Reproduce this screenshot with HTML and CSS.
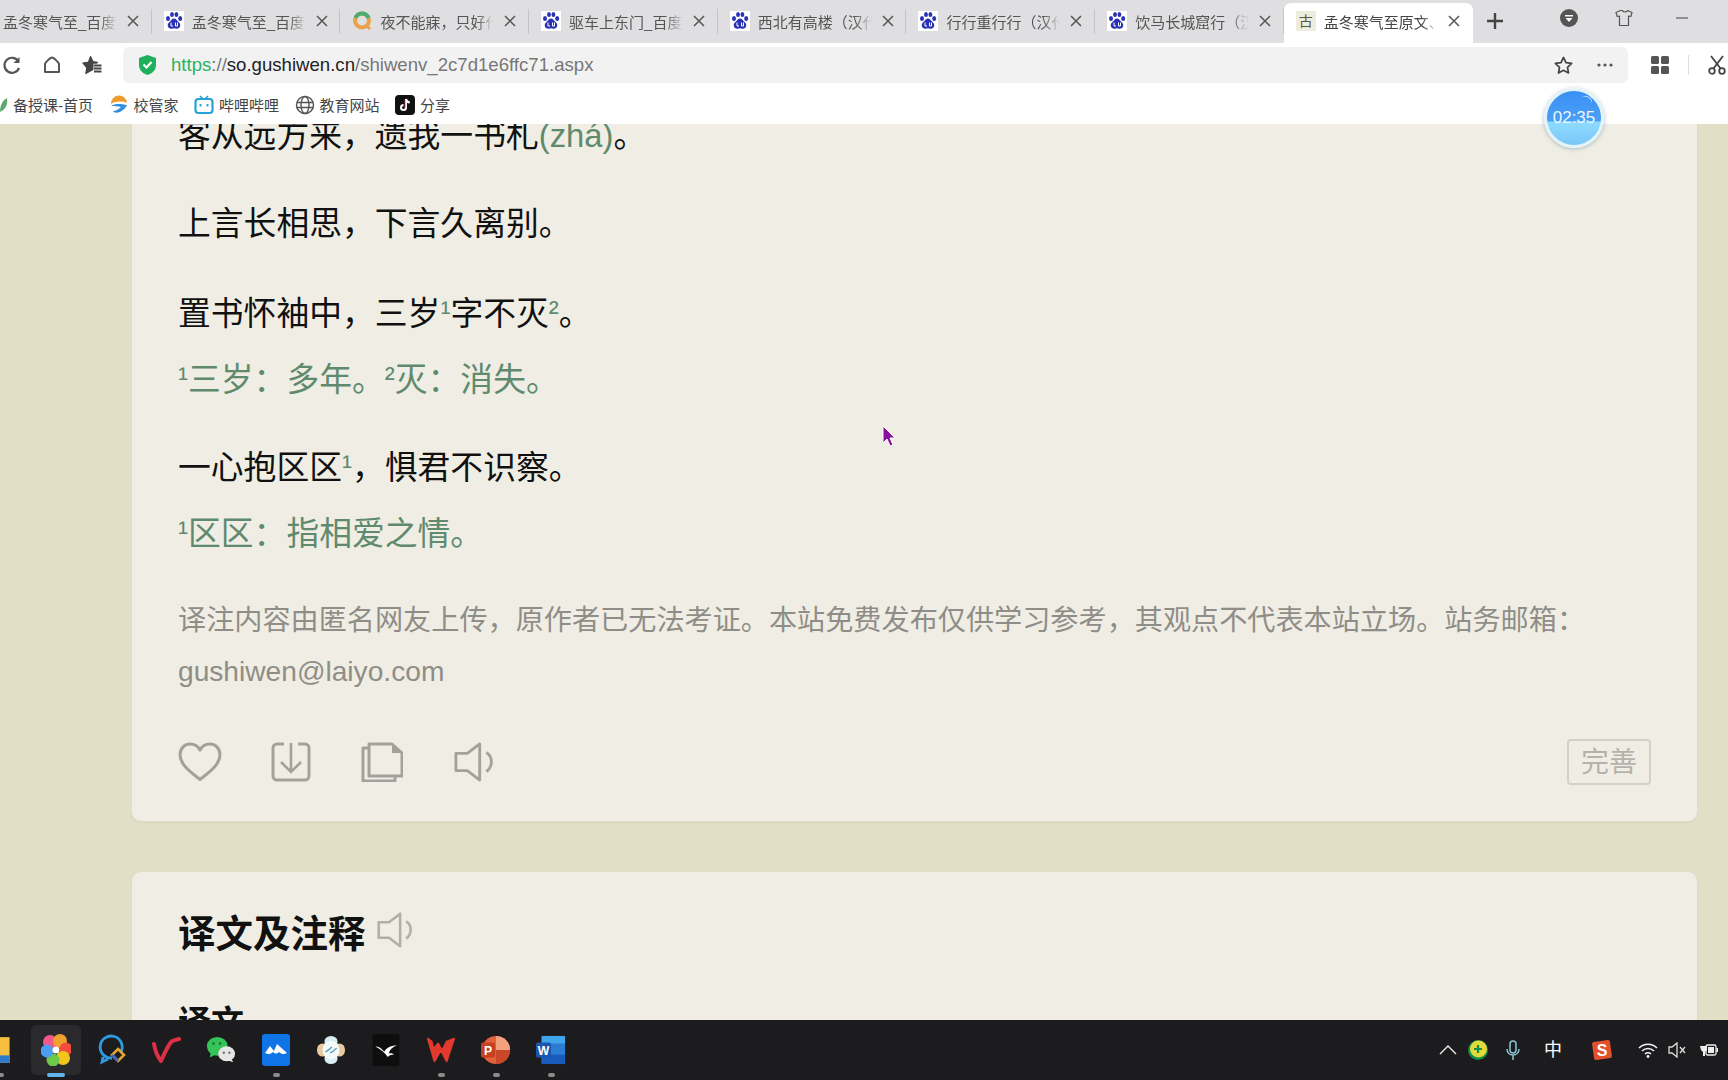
FILE: index.html
```html
<!DOCTYPE html>
<html lang="zh-CN">
<head>
<meta charset="utf-8">
<title>孟冬寒气至原文、翻译</title>
<link rel="stylesheet" href="styles.css">
</head>
<body>
<svg class="defs" aria-hidden="true">
  <symbol id="baidu" viewBox="0 0 20 20">
    <rect width="20" height="20" fill="#fff"/>
    <g fill="#2a32b5">
      <ellipse cx="4" cy="7.5" rx="2" ry="2.6"/>
      <ellipse cx="8" cy="3.6" rx="1.9" ry="2.5"/>
      <ellipse cx="12.4" cy="3.6" rx="1.9" ry="2.5"/>
      <ellipse cx="16.2" cy="7.5" rx="2" ry="2.6"/>
      <path d="M10 7.4c2 0 2.6 1.7 4 3 1.5 1.3 2.6 2.5 2.2 4.6-.4 2.3-2.5 3-4 2.7-.9-.2-1.500-.5-2.200-.5s-1.300.3-2.200.5c-1.500.3-3.600-.4-4-2.700-.4-2.100.7-3.300 2.200-4.600 1.400-1.300 2-3 4-3z"/>
    </g>
    <path d="M7 11.500v3.500h2M11.500 11.500v3.500h2v-3.500" fill="none" stroke="#fff" stroke-width="1"/>
  </symbol>
  <symbol id="close" viewBox="0 0 12 12">
    <path d="M1 1l10 10M11 1L1 11" stroke="#555" stroke-width="1.500" fill="none"/>
  </symbol>
  <symbol id="speaker" viewBox="0 0 42 42">
    <path d="M2 12h12L27 2v38L14 30H2z" fill="none" stroke="currentColor" stroke-width="3" stroke-linejoin="round"/>
    <path d="M34 11c7 4 7 15 0 20" fill="none" stroke="currentColor" stroke-width="3"/>
  </symbol>
</svg>

<header class="tabbar">
  <div class="tab">
    <svg class="fav"><use href="#baidu"/></svg><span class="tab-title">孟冬寒气至_百度搜索</span><svg class="tab-x"><use href="#close"/></svg>
  </div>
  <div class="tab">
    <svg class="fav"><use href="#baidu"/></svg><span class="tab-title">孟冬寒气至_百度搜索</span><svg class="tab-x"><use href="#close"/></svg>
  </div>
  <div class="tab">
    <svg class="fav" viewBox="0 0 20 20"><circle cx="10" cy="9.500" r="7" fill="none" stroke="#e9a24a" stroke-width="4"/><path d="M3.500 7a7 7 0 0 1 13 0" fill="none" stroke="#49ad6f" stroke-width="4"/><path d="M14 14l4 4" stroke="#e9a24a" stroke-width="3"/></svg><span class="tab-title">夜不能寐，只好什么</span><svg class="tab-x"><use href="#close"/></svg>
  </div>
  <div class="tab">
    <svg class="fav"><use href="#baidu"/></svg><span class="tab-title">驱车上东门_百度搜索</span><svg class="tab-x"><use href="#close"/></svg>
  </div>
  <div class="tab">
    <svg class="fav"><use href="#baidu"/></svg><span class="tab-title">西北有高楼（汉代）</span><svg class="tab-x"><use href="#close"/></svg>
  </div>
  <div class="tab">
    <svg class="fav"><use href="#baidu"/></svg><span class="tab-title">行行重行行（汉代）</span><svg class="tab-x"><use href="#close"/></svg>
  </div>
  <div class="tab">
    <svg class="fav"><use href="#baidu"/></svg><span class="tab-title">饮马长城窟行（汉代）</span><svg class="tab-x"><use href="#close"/></svg>
  </div>
  <div class="tab tab-active">
    <span class="fav fav-gu">古</span><span class="tab-title">孟冬寒气至原文、翻译</span><svg class="tab-x"><use href="#close"/></svg>
  </div>
  <svg class="new-tab" viewBox="0 0 16 16"><path d="M8 0v16M0 8h16" stroke="#444" stroke-width="2.400"/></svg>
  <svg class="win-badge" viewBox="0 0 18 18"><circle cx="9" cy="9" r="9" fill="#555"/><path d="M5 6h8v1.500H5zM5.500 9h7L9 13z" fill="#fff"/></svg>
  <svg class="win-shirt" viewBox="0 0 18 18"><path d="M5.500 1.500L1 3.500l1.200 4 2.300-.5v9.500h9V7l2.300.5 1.200-4-4.500-2c-.8 2-4.200 2-5 0z" fill="none" stroke="#555" stroke-width="1.200" stroke-linejoin="round"/></svg>
  <svg class="win-min" viewBox="0 0 12 2"><path d="M0 1h12" stroke="#666" stroke-width="1.300"/></svg>
</header>

<nav class="toolbar">
  <svg class="tool tool-first" viewBox="0 0 20 20"><path d="M16.500 6.500A7.500 7.500 0 1 0 17 13" fill="none" stroke="#555" stroke-width="2.200"/><path d="M17.500 2v6h-6z" fill="#555"/></svg>
  <svg class="tool" viewBox="0 0 20 20"><path d="M3 9c0-1 5-6.500 7-6.500S17 8 17 9v8H3z" fill="none" stroke="#555" stroke-width="2" stroke-linejoin="round"/></svg>
  <svg class="tool" viewBox="0 0 20 20"><path d="M8.500 1.500l2.500 5.200 4.500.6-4 3.700-.2 3.500-3 1.500-4.500 2.500 1-5.800L1 8l5.500-1z" fill="#444" stroke="#444" stroke-width="1.200" stroke-linejoin="round"/><path d="M11.500 10.500h8M11.500 13.500h8M11.500 16.500h8" stroke="#fff" stroke-width="3.500"/><path d="M12 10.500h7.500M12 13.500h7.500M12 16.500h7.500" stroke="#444" stroke-width="1.800"/></svg>
  <div class="address">
    <svg class="shield" viewBox="0 0 17 20"><path d="M8.500 0L17 3v7c0 5-3.500 8.500-8.500 10C3.500 18.500 0 15 0 10V3z" fill="#1eb05a"/><path d="M4.500 9.500l3 3 5-5.500" fill="none" stroke="#fff" stroke-width="2.200"/></svg>
    <div class="url"><span class="u-green">https</span><span class="u-gray">://</span><span class="u-host">so.gushiwen.cn</span><span class="u-gray">/shiwenv_2c7d1e6ffc71.aspx</span></div>
    <svg class="addr-star" viewBox="0 0 20 20"><path d="M10 1.500l2.600 5.500 6 .8-4.400 4.100 1.100 6-5.300-2.900-5.300 2.900 1.100-6L1.400 7.800l6-.8z" fill="none" stroke="#444" stroke-width="1.800" stroke-linejoin="round"/></svg>
    <svg class="addr-dots" viewBox="0 0 16 4"><circle cx="2" cy="2" r="1.600" fill="#555"/><circle cx="8" cy="2" r="1.600" fill="#555"/><circle cx="14" cy="2" r="1.600" fill="#555"/></svg>
  </div>
  <svg class="grid-ico" viewBox="0 0 18 18"><g fill="#555"><rect width="8" height="8" rx="1.500"/><rect x="10" width="8" height="8" rx="1.500"/><rect y="10" width="8" height="8" rx="1.500"/><rect x="10" y="10" width="8" height="8" rx="1.500"/></g></svg>
  <span class="tool-sep"></span>
  <svg class="scissors" viewBox="0 0 18 20"><g fill="none" stroke="#444" stroke-width="1.800"><circle cx="4" cy="16" r="2.800"/><circle cx="14" cy="16" r="2.800"/><path d="M5.500 13.500L15 1M12.500 13.500L3 1"/></g></svg>
</nav>

<nav class="bookmarks">
  <span class="bm bm-first"><svg class="bm-ico bm-leaf" viewBox="0 0 8 16"><path d="M0 15C0 8 3 3 7 1c1 6-1 11-7 14z" fill="#5aa86b"/></svg>备授课-首页</span>
  <span class="bm"><svg class="bm-ico" viewBox="0 0 20 20"><path d="M2 9a8 8 0 0 1 16-1c-5-2-11-2-16 1z" fill="#ee9a2e"/><path d="M2 11c5-3 10-2 16-1-1 3-4 5-7 7-3 1-6 1-7-1 3 0 6-2 8-4-3-1-7-1-10-1z" fill="#2f8fe0"/></svg>校管家</span>
  <span class="bm"><svg class="bm-ico" viewBox="0 0 20 20"><path d="M6 1l3 3M14 1l-3 3" stroke="#27a3d8" stroke-width="1.600"/><rect x="1.500" y="4" width="17" height="14" rx="3" fill="none" stroke="#27a3d8" stroke-width="2.200"/><path d="M6.500 9v2.500M13.500 9v2.500" stroke="#27a3d8" stroke-width="2"/></svg>哔哩哔哩</span>
  <span class="bm"><svg class="bm-ico" viewBox="0 0 20 20"><g fill="none" stroke="#555" stroke-width="1.400"><circle cx="10" cy="10" r="8.500"/><ellipse cx="10" cy="10" rx="4" ry="8.500"/><path d="M1.500 7.500h17M1.500 12.500h17"/></g></svg>教育网站</span>
  <span class="bm"><svg class="bm-ico" viewBox="0 0 20 20"><rect width="20" height="20" rx="4" fill="#111"/><path d="M11 4v8.500a2.500 2.500 0 1 1-2.500-2.500M11 4c.3 2 1.700 3.300 3.800 3.500" fill="none" stroke="#fff" stroke-width="2"/><path d="M10 5v8" stroke="#e8345a" stroke-width=".8"/></svg>分享</span>
</nav>

<main class="viewport">
  <div class="scroller">
    <article class="card card-poem">
      <p class="verse">客从远方来，遗我一书札<span class="green">(zhá)</span>。</p>
      <p class="verse verse-gap">上言长相思，下言久离别。</p>
      <div class="verse">
        <p>置书怀袖中，三岁<span class="green sup">¹</span>字不灭<span class="green sup">²</span>。</p>
        <p class="green"><span class="sup">¹</span>三岁：多年。<span class="sup">²</span>灭：消失。</p>
      </div>
      <div class="verse">
        <p>一心抱区区<span class="green sup">¹</span>，惧君不识察。</p>
        <p class="green"><span class="sup">¹</span>区区：指相爱之情。</p>
      </div>
      <p class="credit">译注内容由匿名网友上传，原作者已无法考证。本站免费发布仅供学习参考，其观点不代表本站立场。站务邮箱：gushiwen@laiyo.com</p>
      <div class="actions">
        <svg class="act act-heart" viewBox="0 0 44 40"><path d="M22 37.500C14 31 2 23 2 13 2 6 7 2 12 2c4 0 8 2 10 6 2-4 6-6 10-6 5 0 10 4 10 11 0 10-12 18-20 24.500z" fill="none" stroke="#a3a19b" stroke-width="3" stroke-linejoin="round"/></svg>
        <svg class="act act-down" viewBox="0 0 40 40"><path d="M13 2H6a4 4 0 0 0-4 4v28a4 4 0 0 0 4 4h28a4 4 0 0 0 4-4V6a4 4 0 0 0-4-4h-7" fill="none" stroke="#a3a19b" stroke-width="3"/><path d="M20 1v29M10 20l10 10 10-10" fill="none" stroke="#a3a19b" stroke-width="2.600"/></svg>
        <svg class="act act-copy" viewBox="0 0 42 40"><path d="M7 6H2v33h32v-5" fill="none" stroke="#a3a19b" stroke-width="3" stroke-linejoin="round"/><path d="M8 2h23l10 9v23H8z" fill="none" stroke="#a3a19b" stroke-width="3" stroke-linejoin="round"/><path d="M31 2v9h10z" fill="#a3a19b"/></svg>
        <svg class="act act-sound"><use href="#speaker"/></svg>
        <span class="perfect">完善</span>
      </div>
    </article>

    <article class="card card-notes">
      <h2 class="card-title">译文及注释<svg class="title-sound"><use href="#speaker"/></svg></h2>
      <h3 class="card-sub">译文</h3>
    </article>
  </div>
  <svg class="cursor" viewBox="0 0 14 22"><path d="M1 1v17l4-4 3 7 3-1-3-7h5z" fill="#8a0f9e" stroke="#fff" stroke-width="1"/></svg>
</main>

<div class="timer">02:35</div>

<footer class="taskbar">
  <div class="apps">
    <div class="app"><svg class="app-ico" viewBox="0 0 28 28"><path d="M0 2h22v24H0z" fill="#f6bf3f"/><path d="M0 19h22v7H0z" fill="#2f79c9"/></svg><i class="dot"></i></div>
    <div class="app app-active"><svg class="app-ico" viewBox="0 0 30 32"><circle cx="9" cy="8" r="7" fill="#ef5a8a"/><circle cx="19" cy="7" r="7" fill="#f0a12e"/><circle cx="25" cy="15" r="6.500" fill="#f44d3c"/><circle cx="22" cy="24" r="7" fill="#f2c51d"/><circle cx="12" cy="26" r="6.500" fill="#6cc74b"/><circle cx="6" cy="17" r="6.500" fill="#4a9df0"/><circle cx="15" cy="16" r="3.500" fill="#fff"/></svg><i class="dot dot-active"></i></div>
    <div class="app"><svg class="app-ico" viewBox="0 0 30 30"><path d="M16 23a11 11 0 1 1 9-6M7 22l-1 5 6-3" fill="none" stroke="#2f9ae0" stroke-width="2.800"/><path d="M22 14l6 6-6 6-6-6z" fill="none" stroke="#e6a532" stroke-width="2.600"/><path d="M22 26l-6-6" stroke="#3a64c8" stroke-width="2.600"/></svg></div>
    <div class="app"><svg class="app-ico" viewBox="0 0 30 30"><path d="M3 9c1 6 3 12 7 17 4-9 7-15 10-19 2-2 5-2 8-3" fill="none" stroke="#dd2f45" stroke-width="4" stroke-linecap="round" stroke-linejoin="round"/></svg></div>
    <div class="app"><svg class="app-ico" viewBox="0 0 32 32"><ellipse cx="12" cy="12" rx="11" ry="10" fill="#35c45a"/><path d="M5 19l-1 5 6-3z" fill="#35c45a"/><ellipse cx="22" cy="20" rx="9" ry="8" fill="#e6e6e6"/><path d="M27 25l2 4-6-2z" fill="#e6e6e6"/><circle cx="19" cy="19" r="1.300" fill="#777"/><circle cx="25" cy="19" r="1.300" fill="#777"/><circle cx="8" cy="9" r="1.300" fill="#146b2c"/><circle cx="15" cy="9" r="1.300" fill="#146b2c"/></svg></div>
    <div class="app"><svg class="app-ico" viewBox="0 0 28 32"><rect width="28" height="32" rx="3" fill="#0f74e6"/><path d="M3 19l5-7 4 5 3-7 10 9c-3 2-6 1-8-1-2 2-4 2-6 0-2 2-5 3-8 1z" fill="#fff"/></svg><i class="dot"></i></div>
    <div class="app"><svg class="app-ico" viewBox="0 0 32 32"><g fill="#d9eef2"><ellipse cx="16" cy="7" rx="7" ry="6"/><ellipse cx="16" cy="25" rx="7" ry="6"/></g><ellipse cx="7" cy="16" rx="6" ry="7" fill="#e8c9a0"/><ellipse cx="25" cy="16" rx="6" ry="7" fill="#e8c9a0"/><ellipse cx="16" cy="16" rx="9" ry="10" fill="#f4fbfb"/><path d="M10 18c3-1 5-4 7-5M15 19c3-1 5-3 7-5" stroke="#4a9ab8" stroke-width="1.500" fill="none"/></svg></div>
    <div class="app"><svg class="app-ico" viewBox="0 0 30 36"><rect width="30" height="36" rx="2" fill="#0e0e0f"/><path d="M3 14c4 0 7 2 10 6 2-4 7-7 14-7-5 2-7 4-9 9 3-1 5 0 6 1-3 0-6 1-7 3-3-5-8-9-14-12z" fill="#fff"/></svg></div>
    <div class="app"><svg class="app-ico" viewBox="0 0 32 30"><path d="M2 3l7 24 7-12 6 12 8-24-8 3-5 10-4-8-5 6-2-8z" fill="#e23a2e" stroke="#e23a2e" stroke-width="2" stroke-linejoin="round"/></svg><i class="dot"></i></div>
    <div class="app"><svg class="app-ico" viewBox="0 0 32 32"><circle cx="16" cy="16" r="15" fill="#e0613a"/><path d="M16 1a15 15 0 0 1 15 15H16z" fill="#f2a07e"/><path d="M16 16h15a15 15 0 0 1-15 15z" fill="#c9482a"/><rect x="0" y="8" width="15" height="16" rx="2" fill="#c7401f"/><text class="app-letter" x="7.500" y="21">P</text></svg><i class="dot"></i></div>
    <div class="app"><svg class="app-ico" viewBox="0 0 32 32"><rect x="6" y="1" width="25" height="30" rx="2" fill="#2b7cd3"/><rect x="6" y="1" width="25" height="8" fill="#41a5ee"/><rect x="6" y="21" width="25" height="10" fill="#185abd"/><rect x="0" y="8" width="16" height="16" rx="2" fill="#1a56b0"/><text class="app-letter" x="8" y="21">W</text></svg><i class="dot"></i></div>
  </div>
  <div class="tray">
    <svg class="tr tr-up" viewBox="0 0 18 10"><path d="M1 9l8-8 8 8" fill="none" stroke="#eee" stroke-width="1.400"/></svg>
    <svg class="tr tr-green" viewBox="0 0 20 20"><circle cx="10" cy="10" r="10" fill="#0f8f4a"/><circle cx="10.500" cy="9" r="8.500" fill="#e4d93b"/><path d="M10 5v8M6 9h8" stroke="#0f8f4a" stroke-width="2.200"/></svg>
    <svg class="tr tr-mic" viewBox="0 0 14 20"><rect x="4" y="1" width="6" height="12" rx="3" fill="none" stroke="#8ec6d6" stroke-width="1.500"/><path d="M1 9c0 8 12 8 12 0M7 15v5" fill="none" stroke="#8ec6d6" stroke-width="1.500"/></svg>
    <span class="tr-ime">中</span>
    <svg class="tr tr-s" viewBox="0 0 20 20"><rect x="1" y="1" width="18" height="18" rx="2" fill="#e2502c" transform="rotate(-8 10 10)"/><text class="tray-s" x="10" y="16">S</text></svg>
    <svg class="tr tr-wifi" viewBox="0 0 20 16"><g fill="none" stroke="#f2f2f2" stroke-width="1.500"><path d="M1 6c5-5 13-5 18 0M4 9c3.500-3.500 8.500-3.500 12 0M7 12c1.700-1.700 4.300-1.700 6 0"/></g><circle cx="10" cy="14.500" r="1.400" fill="#f2f2f2"/></svg>
    <svg class="tr tr-spk" viewBox="0 0 18 16"><path d="M1 5h3l5-4v14l-5-4H1z" fill="none" stroke="#ddd" stroke-width="1.300"/><path d="M12 5l5 6M17 5l-5 6" stroke="#ddd" stroke-width="1.300"/></svg>
    <svg class="tr tr-bat" viewBox="0 0 20 14"><path d="M4 0v3M7 0v3M2 3h7v4l-2 2v4H5V9L3 7z" fill="#eee"/><rect x="8" y="2" width="10" height="10" rx="1.500" fill="none" stroke="#eee" stroke-width="1.300"/><rect x="10" y="4" width="6" height="6" fill="#eee"/><rect x="18.500" y="5" width="1.500" height="4" fill="#eee"/></svg>
  </div>
</footer>
</body>
</html>
```
FILE: styles.css
```css
* { box-sizing: border-box; }
html, body { margin: 0; height: 100%; }
body {
  width: 1728px;
  height: 1080px;
  overflow: hidden;
  display: flex;
  flex-direction: column;
  font-family: "Liberation Sans", "Noto Sans CJK SC", sans-serif;
  background: #fff;
}
.defs { width: 0; height: 0; position: absolute; }
p { margin: 0; }

/* tabs */
.tabbar {
  flex: 0 0 43px;
  display: flex;
  align-items: flex-end;
  background: #dfdfe1;
  overflow: hidden;
}
.tab {
  position: relative;
  flex: 0 0 188.700px;
  height: 40px;
  display: flex;
  align-items: center;
  padding: 0 0 4px 12px;
  color: #555;
  font-size: 15px;
}
.tab:first-child { margin-left: -37px; }
.tab::after {
  content: "";
  position: absolute;
  right: 0;
  top: 6px;
  height: 25px;
  width: 1px;
  background: #c4c4c6;
}
.tab-active {
  background: #fff;
  border-radius: 7px 7px 0 0;
  color: #444;
}
.tab-active::after { display: none; }
.fav { flex: 0 0 20px; width: 20px; height: 20px; }
.fav-gu {
  background: #eeecdf;
  color: #5a5a3c;
  font-size: 14px;
  line-height: 20px;
  text-align: center;
}
.tab-title {
  flex: 0 0 114px;
  margin-left: 8px;
  overflow: hidden;
  white-space: nowrap;
  -webkit-mask-image: linear-gradient(to right, #000 85%, transparent 100%);
  mask-image: linear-gradient(to right, #000 85%, transparent 100%);
}
.tab-x { flex: 0 0 12px; width: 12px; height: 12px; margin-left: 10px; }
.new-tab { flex: 0 0 16px; width: 16px; height: 16px; margin: 0 0 14px 14px; }
.win-badge { flex: 0 0 18px; width: 18px; height: 18px; margin: 0 0 16px 57px; }
.win-shirt { flex: 0 0 18px; width: 18px; height: 18px; margin: 0 0 16px 37px; }
.win-min { flex: 0 0 12px; width: 12px; height: 2px; margin: 0 0 24px 43px; }

/* toolbar */
.toolbar {
  flex: 0 0 40px;
  display: flex;
  align-items: center;
  padding-top: 4px;
  background: #fff;
  overflow: hidden;
}
.tool { flex: 0 0 20px; width: 20px; height: 20px; margin-right: 20px; }
.tool-first { margin-left: 2px; }
.tool:nth-child(3) { margin-right: 21px; }
.address {
  flex: 0 0 1505px;
  height: 36px;
  display: flex;
  align-items: center;
  padding: 0 15px 0 16px;
  background: #f2f2f3;
  border-radius: 6px;
}
.shield { flex: 0 0 17px; width: 17px; height: 20px; }
.url { flex: 1; margin-left: 15px; font-size: 18.600px; color: #888; white-space: nowrap; }
.u-green { color: #2bb35f; }
.u-gray { color: #777; }
.u-host { color: #222; }
.addr-star { flex: 0 0 19px; width: 19px; height: 19px; }
.addr-dots { flex: 0 0 16px; width: 16px; height: 4px; margin-left: 24px; }
.grid-ico { flex: 0 0 18px; width: 18px; height: 18px; margin-left: 23px; }
.tool-sep { flex: 0 0 1px; height: 20px; margin-left: 19px; background: #ddd; }
.scissors { flex: 0 0 18px; width: 18px; height: 20px; margin-left: 19px; }

/* bookmarks */
.bookmarks {
  flex: 0 0 41px;
  display: flex;
  align-items: center;
  padding-top: 2px;
  background: #fff;
  color: #444;
  font-size: 15px;
  white-space: nowrap;
}
.bm { display: flex; align-items: center; margin-left: 15.500px; }
.bm-first { margin-left: 0; }
.bm-ico { flex: 0 0 20px; width: 20px; height: 20px; margin-right: 5px; }
.bm-leaf { flex: 0 0 8px; width: 8px; height: 16px; margin-right: 5px; }

/* page */
.viewport {
  position: relative;
  flex: 0 0 896px;
  overflow: hidden;
  background: #e2dfc7;
}
.scroller { margin-top: -62px; padding: 0 30px 0 131px; }
.card {
  background: #f0eee4;
  border: 1px solid #e0dcc9;
  border-radius: 10px;
  box-shadow: 0 1px 1px #d8d4bd;
  padding: 0 46px;
}
.card-poem { padding-top: 40px; padding-bottom: 36px; margin-bottom: 49px; }
.verse { margin-bottom: 22px; font-size: 32.800px; line-height: 66px; color: #111; }
.verse-gap { margin-bottom: 24px; }
.green { color: #5f8a6e; }
.sup { font-size: 30px; line-height: 0; vertical-align: 3px; }
.credit {
  margin-top: 28px;
  font-size: 28.150px;
  line-height: 51px;
  color: #8f8d87;
}
.actions { display: flex; align-items: center; height: 46px; margin-top: 42px; }
.act { height: 40px; flex: none; }
.act-heart { width: 44px; }
.act-down { width: 40px; margin-left: 49px; }
.act-copy { width: 42px; margin-left: 50px; }
.act-sound { width: 42px; margin-left: 50px; color: #a3a19b; }
.perfect {
  width: 84px;
  height: 46px;
  margin-left: auto;
  border: 2px solid #d2d0c7;
  border-radius: 4px;
  color: #b4b2aa;
  font-size: 28px;
  line-height: 44px;
  text-align: center;
}
.card-notes { padding-top: 36px; height: 260px; }
.card-title {
  display: flex;
  align-items: center;
  height: 44px;
  margin: 0;
  font-size: 37.500px;
  font-weight: 700;
  color: #111;
}
.title-sound { width: 36px; height: 36px; margin: 0 0 0 11px; color: #b1afa8; }
.card-sub { margin: 49px 0 0; font-size: 33px; line-height: 44px; font-weight: 700; color: #111; }
.timer {
  position: absolute;
  left: 1544px;
  top: 88px;
  width: 60px;
  height: 60px;
  border: 3px solid #e3f4f8;
  border-radius: 50%;
  background: linear-gradient(to bottom, #3a8ff5 0%, #4aa0f6 55%, #8ddcff 58%, #7ac6f7 100%);
  box-shadow: 0 1px 4px rgba(80, 120, 140, .45);
  color: #eaf8ff;
  font-size: 17px;
  line-height: 54px;
  text-align: center;
}
.timer::before {
  content: "";
  position: absolute;
  right: 9px;
  top: 5px;
  width: 12px;
  height: 10px;
  border-top: 1px solid #d7ecff;
  border-radius: 50%;
  transform: rotate(30deg);
}
.cursor { position: absolute; left: 882px; top: 301px; width: 14px; height: 22px; }

/* taskbar */
.taskbar {
  flex: 0 0 60px;
  display: flex;
  align-items: center;
  background: #1c1c1e;
  overflow: hidden;
}
.apps { display: flex; align-items: center; height: 60px; margin-left: -27px; }
.app {
  position: relative;
  flex: 0 0 55.100px;
  height: 50px;
  display: flex;
  align-items: center;
  justify-content: center;
}
.app-active::before {
  content: "";
  position: absolute;
  inset: 0 2.500px;
  background: #2a2a2d;
  border-radius: 5px;
}
.app-ico { position: relative; width: 30px; height: 32px; }
.dot {
  position: absolute;
  left: 50%;
  bottom: -2px;
  width: 7px;
  height: 4px;
  margin-left: -3.500px;
  border-radius: 2px;
  background: #8b8b8b;
}
.dot-active { width: 18px; margin-left: -9px; background: #63b4ea; }
.app-letter {
  fill: #fff;
  font: 700 13px "Liberation Sans", sans-serif;
  text-anchor: middle;
}
.tray { display: flex; align-items: center; margin-left: auto; padding-right: 10px; }
.tr { flex: none; height: 20px; }
.tr-up { width: 18px; height: 10px; }
.tr-green { width: 20px; margin-left: 11px; }
.tr-mic { width: 14px; margin-left: 18px; }
.tr-ime { flex: none; width: 18px; margin-left: 24px; color: #fff; font-size: 18px; line-height: 20px; }
.tr-s { width: 20px; margin-left: 30px; }
.tray-s { fill: #fff; font: 700 16px "Liberation Sans", sans-serif; text-anchor: middle; }
.tr-wifi { width: 20px; height: 16px; margin-left: 26px; }
.tr-spk { width: 18px; height: 16px; margin-left: 10px; }
.tr-bat { width: 20px; height: 14px; margin-left: 12px; }
```
